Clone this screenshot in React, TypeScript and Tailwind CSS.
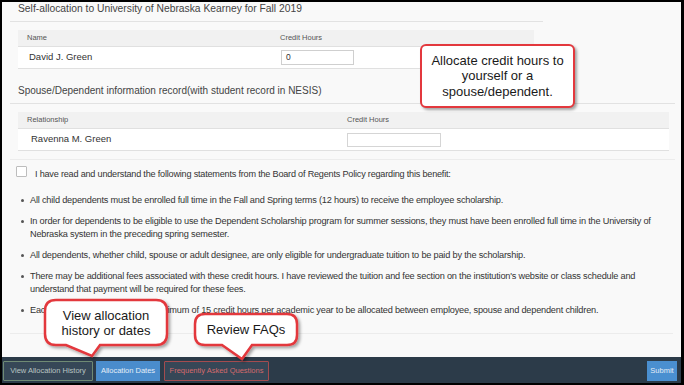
import React from "react";

function bubblePath(x: number, y: number, w: number, h: number, r: number, bx1: number, bx2: number, px: number, py: number) {
  const b = y + h;
  return `M ${x + r} ${y} H ${x + w - r} Q ${x + w} ${y} ${x + w} ${y + r} V ${b - r} Q ${x + w} ${b} ${x + w - r} ${b} H ${bx2} L ${px} ${py} L ${bx1} ${b} H ${x + r} Q ${x} ${b} ${x} ${b - r} V ${y + r} Q ${x} ${y} ${x + r} ${y} Z`;
}

const bullets: React.ReactNode[] = [
  "All child dependents must be enrolled full time in the Fall and Spring terms (12 hours) to receive the employee scholarship.",
  <>
    In order for dependents to be eligible to use the Dependent Scholarship program for summer sessions, they must have been enrolled full time in the University of
    <br />
    Nebraska system in the preceding spring semester.
  </>,
  "All dependents, whether child, spouse or adult designee, are only eligible for undergraduate tuition to be paid by the scholarship.",
  <>
    There may be additional fees associated with these credit hours. I have reviewed the tuition and fee section on the institution's website or class schedule and
    <br />
    understand that payment will be required for these fees.
  </>,
  "Each employee is eligible for a maximum of 15 credit hours per academic year to be allocated between employee, spouse and dependent children.",
];

export default function App() {
  return (
    <div className="w-[684px] h-[385px] relative overflow-hidden border-black border-t-2 border-l-2 border-b-2 border-r-[3px] bg-[#f9f9f9] flex flex-col font-['Liberation_Sans',Arial,sans-serif] text-[#333]">
      <main className="flex-1 px-[8px] flex flex-col">
        {/* Section 1 */}
        <div className="w-[533px]">
          <div className="pl-[8px] pb-[5px] border-b border-[#e2e2e2] text-[10.3px] leading-[14px] text-[#444]">
            Self-allocation to University of Nebraska Kearney for Fall 2019
          </div>
          <div className="ml-[8px] w-[516px] mt-[8px]">
            <div className="flex h-[17px] items-center bg-[#f1f1f1] border-b border-[#e0e0e0] text-[7.5px] text-[#555]">
              <div className="w-[262px] pl-[9px]">Name</div>
              <div>Credit Hours</div>
            </div>
            <div className="flex h-[22px] items-center bg-white border-b border-[#e0e0e0] text-[9.5px] text-[#333]">
              <div className="w-[262px] pl-[11px]">David J. Green</div>
              <div className="w-[73px] h-[15px] ml-[1px] border border-[#cfcfcf] bg-white flex items-center pl-[4px] text-[8.5px]">0</div>
            </div>
          </div>
        </div>

        {/* Section 2 */}
        <div className="w-[665px] mt-[15px]">
          <div className="pl-[8px] pb-[5px] border-b border-[#e2e2e2] text-[10px] leading-[14px] text-[#444]">
            Spouse/Dependent information record(with student record in NESIS)
          </div>
          <div className="ml-[8px] w-[651px] mt-[8px]">
            <div className="flex h-[17px] items-center bg-[#f1f1f1] border-b border-[#e0e0e0] text-[7.5px] text-[#555]">
              <div className="w-[329px] pl-[9px]">Relationship</div>
              <div>Credit Hours</div>
            </div>
            <div className="flex h-[22px] items-center bg-white border-b border-[#e0e0e0] text-[9.5px] text-[#333]">
              <div className="w-[329px] pl-[13px]">Ravenna M. Green</div>
              <div className="w-[94px] h-[14px] border border-[#d5d5d5] bg-white"></div>
            </div>
          </div>
          <div className="mt-[8px] border-t border-[#ececec]"></div>
        </div>

        {/* Agreement */}
        <div className="flex items-start mt-[6px] ml-[6px]">
          <div className="w-[11px] h-[11px] border border-[#bdbdbd] bg-white rounded-[1px] shrink-0"></div>
          <div className="ml-[8px] mt-[2px] text-[9.1px] tracking-[-0.2px] leading-[13px] text-[#333] whitespace-nowrap">
            I have read and understand the following statements from the Board of Regents Policy regarding this benefit:
          </div>
        </div>
        <ul className="mt-[13px] pl-[11px] text-[9.2px] tracking-[-0.2px] leading-[13px] text-[#333]">
          {bullets.map((b, i) => (
            <li key={i} className="flex items-start mb-[8px]">
              <span className="w-[3px] h-[3px] rounded-full bg-[#555] mt-[5px] shrink-0"></span>
              <span className="ml-[6px] whitespace-nowrap">{b}</span>
            </li>
          ))}
        </ul>
        <div className="mt-[8px] border-t border-[#ececec]"></div>
      </main>

      {/* Footer */}
      <footer className="h-[26px] bg-[#2c3b49] flex items-start pt-[4px] text-[7.5px]">
        <div className="ml-[1px] w-[90px] h-[20px] border border-[#6f8a74] bg-[#364757] text-[#b9c4c2] flex items-center justify-center rounded-[1px]">
          View Allocation History
        </div>
        <div className="ml-[3px] w-[64px] h-[20px] bg-[#4a8ccc] text-[#e4eef8] flex items-center justify-center">
          Allocation Dates
        </div>
        <div className="ml-[4px] w-[105px] h-[20px] border border-[#a44c4f] bg-[#364757] text-[#d46a6c] flex items-center justify-center rounded-[1px]">
          Frequently Asked Questions
        </div>
        <div className="ml-auto mr-[4px] w-[30px] h-[20px] bg-[#4a8fd0] text-[#e2ecf6] flex items-center justify-center">
          Submit
        </div>
      </footer>

      {/* Annotation overlay */}
      <div className="absolute -top-[2px] -left-[2px] w-[684px] h-[385px] pointer-events-none">
        <div className="absolute left-[420px] top-[44px] w-[155px] h-[64px] border-2 border-[#e3383d] rounded-[6px] bg-white shadow-[2px_2px_3px_rgba(0,0,0,0.35)] flex items-center justify-center text-center text-[13px] leading-[15.5px] text-[#1a1a1a]">
          Allocate credit hours to
          <br />
          yourself or a
          <br />
          spouse/dependent.
        </div>
        <svg className="absolute left-0 top-0" width="684" height="385" viewBox="0 0 684 385">
          <defs>
            <filter id="sh" x="-20%" y="-20%" width="140%" height="140%">
              <feDropShadow dx="2" dy="2" stdDeviation="1.5" floodColor="#000" floodOpacity="0.35" />
            </filter>
          </defs>
          <path d={bubblePath(45, 300, 122, 45, 11, 66, 100, 92, 356)} fill="#fff" stroke="#e3383d" strokeWidth="2.5" filter="url(#sh)" />
          <path d={bubblePath(195, 314, 102, 31, 10, 222, 252, 242, 359)} fill="#fff" stroke="#e3383d" strokeWidth="2.5" filter="url(#sh)" />
        </svg>
        <div className="absolute left-[45px] top-[300px] w-[122px] h-[45px] flex items-center justify-center text-center text-[13px] leading-[15px] text-[#1a1a1a]">
          View allocation
          <br />
          history or dates
        </div>
        <div className="absolute left-[195px] top-[314px] w-[102px] h-[31px] flex items-center justify-center text-center text-[13px] leading-[15px] text-[#1a1a1a]">
          Review FAQs
        </div>
      </div>
    </div>
  );
}
